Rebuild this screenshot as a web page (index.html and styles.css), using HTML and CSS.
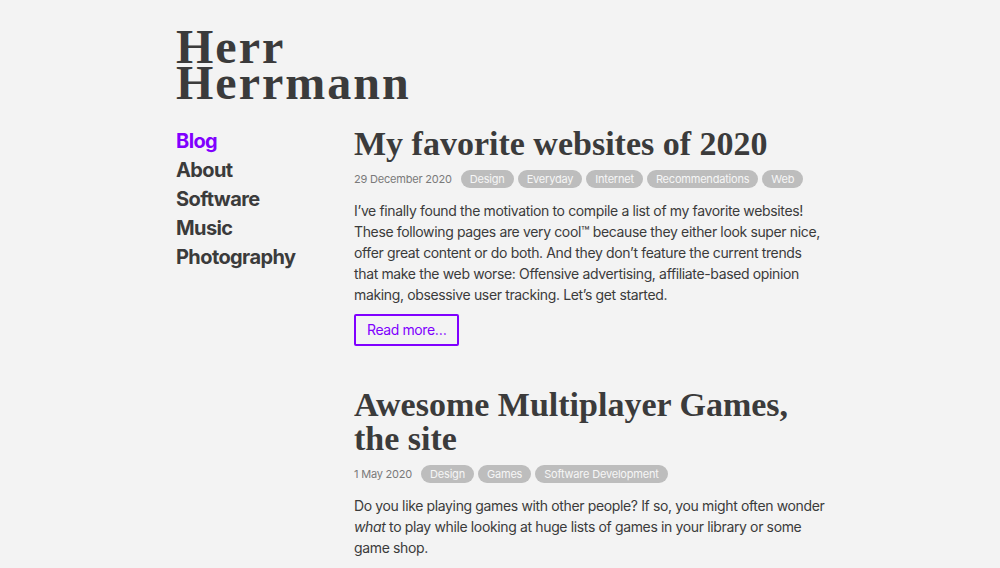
FILE: index.html
```html
<!DOCTYPE html>
<html lang="en">
<head>
<meta charset="utf-8">
<title>Herr Herrmann</title>
<link rel="stylesheet" href="styles.css">
</head>
<body>
<div class="page">
  <header class="site-header">
    <h1 class="site-title">Herr<br>Herrmann</h1>
  </header>
  <div class="layout">
    <nav class="nav">
      <a class="nav-link active" href="#">Blog</a>
      <a class="nav-link" href="#">About</a>
      <a class="nav-link" href="#">Software</a>
      <a class="nav-link" href="#">Music</a>
      <a class="nav-link" href="#">Photography</a>
    </nav>
    <main class="posts">
      <article class="post">
        <h2 class="post-title">My favorite websites of 2020</h2>
        <div class="meta">
          <span class="date">29 December 2020</span>
          <span class="tag">Design</span>
          <span class="tag">Everyday</span>
          <span class="tag">Internet</span>
          <span class="tag">Recommendations</span>
          <span class="tag">Web</span>
        </div>
        <p class="excerpt">I’ve finally found the motivation to compile a list of my favorite websites! These following pages are very cool™ because they either look super nice, offer great content or do both. And they don’t feature the current trends that make the web worse: Offensive advertising, affiliate-based opinion making, obsessive user tracking. Let’s get started.</p>
        <a class="more" href="#">Read more…</a>
      </article>
      <article class="post">
        <h2 class="post-title">Awesome Multiplayer Games, the site</h2>
        <div class="meta">
          <span class="date">1 May 2020</span>
          <span class="tag">Design</span>
          <span class="tag">Games</span>
          <span class="tag">Software Development</span>
        </div>
        <p class="excerpt">Do you like playing games with other people? If so, you might often wonder <em>what</em> to play while looking at huge lists of games in your library or some game shop.</p>
      </article>
    </main>
  </div>
</div>
</body>
</html>
```

FILE: styles.css
```css
html, body {
  margin: 0;
  padding: 0;
  background: #f3f3f3;
  color: #3b3b3b;
}
body {
  font-family: Inter, "Noto Sans", sans-serif;
}
.page {
  width: 652px;
  margin: 0 auto;
  padding-left: 4px;
}
.site-header {
  padding-top: 29px;
}
.site-title {
  margin: 0;
  font-family: "Liberation Serif", serif;
  font-weight: 700;
  font-size: 48px;
  line-height: 36px;
  letter-spacing: 2px;
  color: #3b3b3b;
}
.layout {
  display: flex;
  margin-top: 26px;
}
.nav {
  width: 178px;
  flex: none;
  display: flex;
  flex-direction: column;
}
.nav-link {
  font-size: 20px;
  font-weight: 700;
  line-height: 29px;
  letter-spacing: -0.6px;
  color: #3b3b3b;
  text-decoration: none;
}
.nav-link.active {
  color: #8000ff;
}
.posts {
  flex: 1;
}
.post {
  margin-bottom: 42px;
}
.post-title {
  margin: 0;
  font-family: "Liberation Serif", serif;
  font-weight: 700;
  font-size: 34px;
  line-height: 34px;
  color: #3b3b3b;
}
.meta {
  display: flex;
  align-items: center;
  gap: 4px;
  margin-top: 9px;
  font-size: 11px;
  letter-spacing: -0.2px;
}
.date {
  color: #7a7a7a;
  margin-right: 5px;
}
.tag {
  background: #bdbdbd;
  color: #f6f6f6;
  border-radius: 9px;
  height: 18px;
  line-height: 18px;
  padding: 0 9px;
}
.excerpt {
  margin: 12px 0 0;
  font-size: 14px;
  line-height: 21px;
  letter-spacing: -0.36px;
}
.more {
  display: inline-block;
  margin-top: 9px;
  padding: 5px 11px;
  border: 2px solid #8000ff;
  border-radius: 2px;
  color: #8000ff;
  font-size: 14px;
  line-height: 18px;
  letter-spacing: -0.4px;
  text-decoration: none;
}
```
